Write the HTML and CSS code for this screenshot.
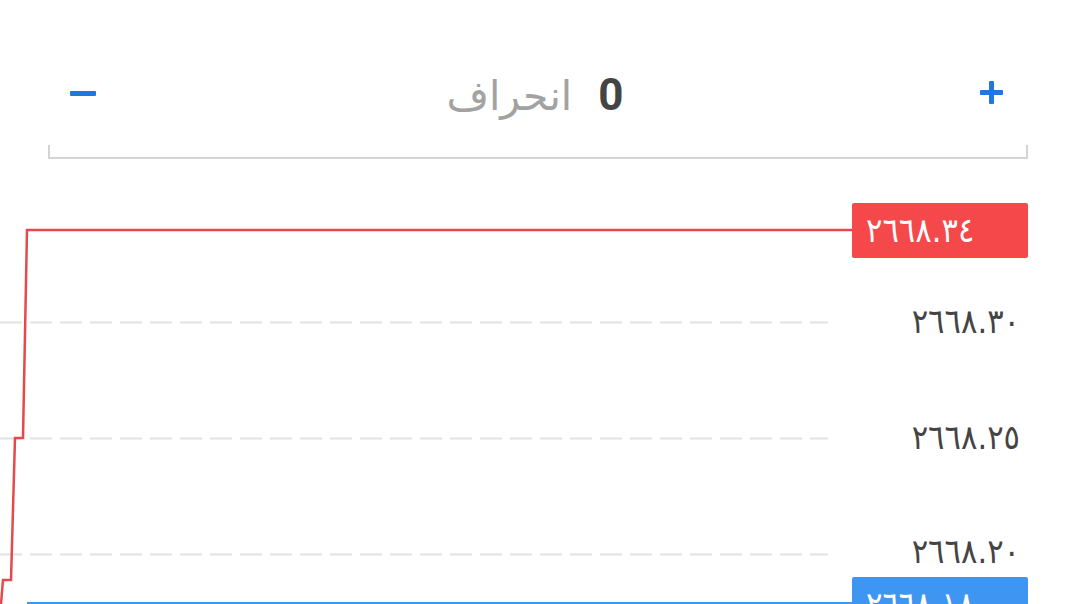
FILE: index.html
```html
<!DOCTYPE html>
<html lang="fa">
<head>
<meta charset="utf-8">
<link rel="stylesheet" href="styles.css">
</head>
<body>
<div class="page">
  <div class="header">
    <button class="step minus" aria-label="minus"><span class="bar-h"></span></button>
    <div class="title">
      <span class="label">انحراف</span>
      <span class="value">0</span>
    </div>
    <button class="step plus" aria-label="plus"><span class="bar-h"></span><span class="bar-v"></span></button>
  </div>
  <div class="bracket"></div>
  <div class="chart">
    <svg class="plot" width="1076" height="445" viewBox="0 0 1076 445">
      <g stroke="#e2e2e2" stroke-width="2" stroke-dasharray="22 8">
        <line x1="0" y1="163.5" x2="828" y2="163.5"/>
        <line x1="0" y1="279.5" x2="828" y2="279.5"/>
        <line x1="0" y1="395.5" x2="828" y2="395.5"/>
      </g>
      <path d="M852 71 H27 L23 279 H15 L11 421 H3 L1 445" fill="none" stroke="#e5484d" stroke-width="2.5"/>
      <line x1="27" y1="444" x2="852" y2="444" stroke="#3f96f2" stroke-width="2"/>
    </svg>
    <div class="tag tag-red">٢٦٦٨.٣٤</div>
    <div class="price p1">٢٦٦٨.٣٠</div>
    <div class="price p2">٢٦٦٨.٢٥</div>
    <div class="price p3">٢٦٦٨.٢٠</div>
    <div class="tag tag-blue">٢٦٦٨.١٨</div>
  </div>
</div>
</body>
</html>
```
FILE: styles.css
```css
html, body {
  margin: 0;
  padding: 0;
  background: #ffffff;
}
.page {
  width: 1076px;
  height: 604px;
  overflow: hidden;
  font-family: "DejaVu Sans", sans-serif;
}
.header {
  height: 145px;
  display: flex;
  justify-content: space-between;
  align-items: flex-start;
  padding: 0 73px 0 70px;
  box-sizing: border-box;
}
.step {
  border: none;
  background: none;
  padding: 0;
  position: relative;
  cursor: pointer;
}
.minus {
  width: 26px;
  height: 26px;
  margin-top: 80px;
}
.plus {
  width: 23px;
  height: 23px;
  margin-top: 81px;
}
.bar-h {
  position: absolute;
  left: 0;
  right: 0;
  top: 50%;
  height: 5px;
  margin-top: -2.5px;
  background: #1f78e0;
  border-radius: 1px;
}
.bar-v {
  position: absolute;
  top: 0;
  bottom: 0;
  left: 50%;
  width: 5px;
  margin-left: -2.5px;
  background: #1f78e0;
  border-radius: 1px;
}
.title {
  display: flex;
  align-items: baseline;
  gap: 26px;
  margin-top: 69px;
  margin-right: 6px;
}
.label {
  font-family: "DejaVu Sans", sans-serif;
  font-size: 41px;
  color: #a2a2a2;
}
.value {
  font-family: Roboto, "Liberation Sans", sans-serif;
  font-weight: 700;
  font-size: 44px;
  color: #444444;
}
.bracket {
  margin: 0 48px 0 48px;
  height: 12px;
  border: 2px solid #d4d4d4;
  border-top: none;
}
.chart {
  position: relative;
  height: 445px;
}
.plot {
  display: block;
}
.tag {
  position: absolute;
  left: 852px;
  width: 176px;
  height: 55px;
  box-sizing: border-box;
  padding-left: 14px;
  border-radius: 2px;
  color: #ffffff;
  font-family: "DejaVu Sans Condensed", "DejaVu Sans", sans-serif;
  font-size: 34px;
  line-height: 55px;
}
.tag-red {
  top: 44px;
  background: #f5484b;
}
.tag-blue {
  top: 418px;
  background: #3f96f2;
}
.price {
  position: absolute;
  right: 56px;
  font-family: "DejaVu Sans Condensed", "DejaVu Sans", sans-serif;
  font-size: 34px;
  line-height: 40px;
  color: #444444;
}
.p1 { top: 142px; }
.p2 { top: 258px; }
.p3 { top: 372px; }
```
